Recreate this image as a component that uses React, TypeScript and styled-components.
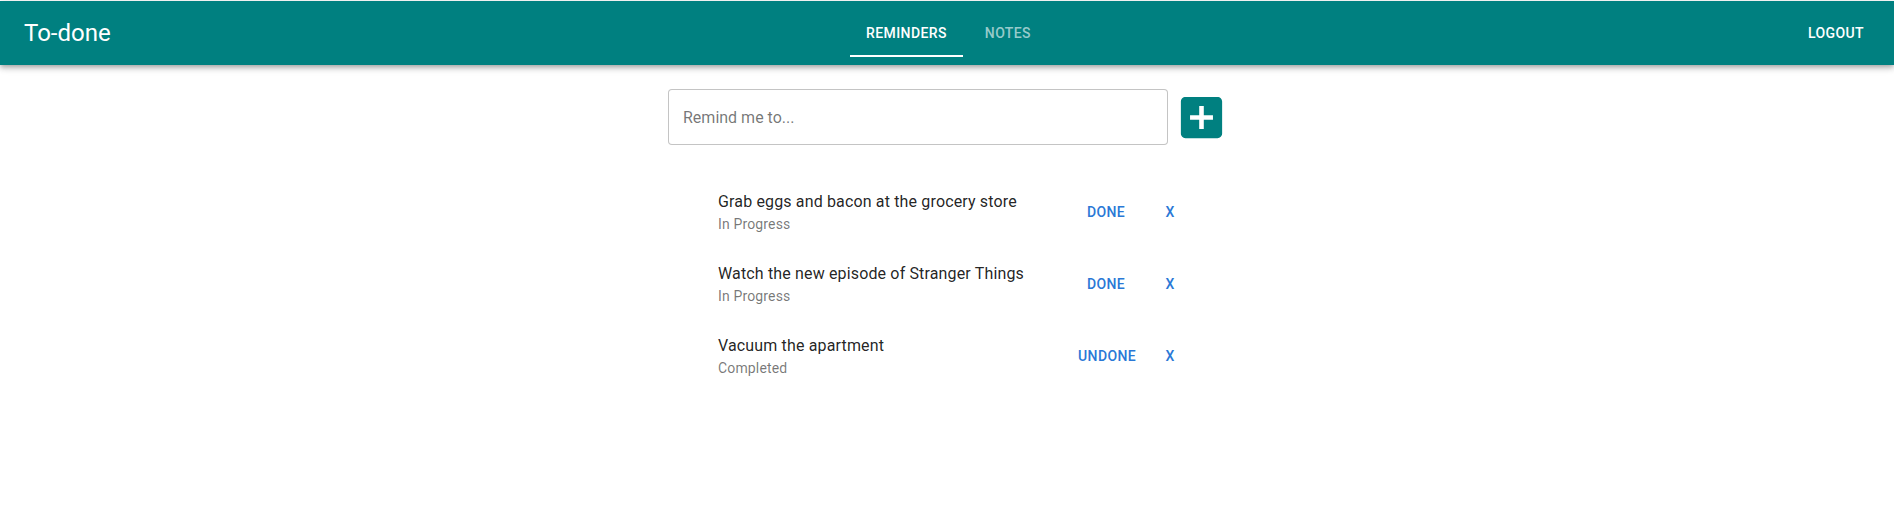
import React from "react";
import styled, { createGlobalStyle } from "styled-components";

const GlobalStyle = createGlobalStyle`
  html, body {
    margin: 0;
    padding: 0;
    background: #ffffff;
    font-family: Roboto, "Liberation Sans", Arial, sans-serif;
  }
  * { box-sizing: border-box; }
`;

const TEAL = "#008080";

const AppBar = styled.header`
  margin-top: 1px;
  background: ${TEAL};
  color: #ffffff;
  box-shadow: 0px 2px 4px -1px rgba(0, 0, 0, 0.2), 0px 4px 5px 0px rgba(0, 0, 0, 0.14),
    0px 1px 10px 0px rgba(0, 0, 0, 0.12);
`;

const Toolbar = styled.div`
  height: 64px;
  padding: 0 22px 0 24px;
  display: grid;
  grid-template-columns: 1fr auto 1fr;
  align-items: center;
`;

const Title = styled.div`
  font-size: 24px;
  font-weight: 400;
  line-height: 32px;
  letter-spacing: 0;
`;

const Tabs = styled.nav`
  display: flex;
  height: 48px;
  padding-left: 7px;
`;

const Tab = styled.button<{ $active?: boolean }>`
  position: relative;
  min-width: 90px;
  height: 48px;
  padding: 12px 16px;
  border: 0;
  background: transparent;
  font-family: Roboto, "Liberation Sans", Arial, sans-serif;
  font-size: 14px;
  font-weight: 500;
  line-height: 24px;
  letter-spacing: 0.02857em;
  text-transform: uppercase;
  color: ${(p) => (p.$active ? "#ffffff" : "rgba(255,255,255,0.6)")};
  cursor: pointer;

  &::after {
    content: "";
    display: ${(p) => (p.$active ? "block" : "none")};
    position: absolute;
    left: 0;
    right: 0;
    bottom: 0;
    height: 2px;
    background: #ffffff;
  }
`;

const RightSlot = styled.div`
  display: flex;
  justify-content: flex-end;
`;

const BarButton = styled.button`
  border: 0;
  background: transparent;
  color: #ffffff;
  font-family: Roboto, "Liberation Sans", Arial, sans-serif;
  font-size: 14px;
  font-weight: 500;
  line-height: 24px;
  letter-spacing: 0.02857em;
  text-transform: uppercase;
  padding: 6px 8px;
  min-width: 64px;
  cursor: pointer;
`;

const Main = styled.main`
  width: 561px;
  margin-left: calc(50% - 279px);
  padding-top: 24px;
`;

const FormRow = styled.form`
  display: flex;
  align-items: center;
  gap: 6px;
`;

const Input = styled.input`
  width: 500px;
  height: 56px;
  padding: 16.5px 14px;
  border: 1px solid rgba(0, 0, 0, 0.23);
  border-radius: 4px;
  font-family: Roboto, "Liberation Sans", Arial, sans-serif;
  font-size: 16px;
  color: rgba(0, 0, 0, 0.87);
  outline: none;

  &::placeholder {
    color: rgba(0, 0, 0, 0.55);
    opacity: 1;
  }
`;

const AddButton = styled.button`
  width: 55px;
  height: 55px;
  padding: 0;
  border: 0;
  background: transparent;
  color: ${TEAL};
  display: flex;
  cursor: pointer;

  svg {
    width: 55px;
    height: 55px;
    fill: currentColor;
  }
`;

const List = styled.ul`
  list-style: none;
  margin: 0;
  padding: 31px 0 8px 34px;
`;

const Row = styled.li`
  width: 496px;
  display: grid;
  grid-template-columns: 1fr 72px 56px;
  align-items: center;
  padding: 8px 0 8px 16px;
`;

const TextBlock = styled.div`
  margin: 6px 0;
`;

const Primary = styled.div`
  font-size: 16px;
  line-height: 24px;
  letter-spacing: 0.00938em;
  color: rgba(0, 0, 0, 0.87);
`;

const Secondary = styled.div`
  font-size: 14px;
  line-height: 20px;
  letter-spacing: 0.01071em;
  color: rgba(0, 0, 0, 0.54);
`;

const ActionCell = styled.div`
  display: flex;
  justify-content: center;
`;

const TextButton = styled.button<{ $compact?: boolean }>`
  border: 0;
  background: transparent;
  color: #2a78d6;
  font-family: Roboto, "Liberation Sans", Arial, sans-serif;
  font-size: 14px;
  font-weight: 500;
  line-height: 24px;
  letter-spacing: 0.02857em;
  text-transform: uppercase;
  padding: 6px 8px;
  min-width: ${(p) => (p.$compact ? "0" : "64px")};
  border-radius: 4px;
  cursor: pointer;
`;

type Reminder = { text: string; done: boolean };

const reminders: Reminder[] = [
  { text: "Grab eggs and bacon at the grocery store", done: false },
  { text: "Watch the new episode of Stranger Things", done: false },
  { text: "Vacuum the apartment", done: true },
];

export default function App() {
  return (
    <>
      <GlobalStyle />
      <AppBar>
        <Toolbar>
          <Title>To-done</Title>
          <Tabs>
            <Tab $active>Reminders</Tab>
            <Tab>Notes</Tab>
          </Tabs>
          <RightSlot>
            <BarButton>Logout</BarButton>
          </RightSlot>
        </Toolbar>
      </AppBar>
      <Main>
        <FormRow onSubmit={(e) => e.preventDefault()}>
          <Input placeholder="Remind me to..." />
          <AddButton type="submit" aria-label="add">
            <svg viewBox="0 0 24 24" aria-hidden="true">
              <path d="M19 3H5c-1.11 0-2 .9-2 2v14c0 1.1.89 2 2 2h14c1.1 0 2-.9 2-2V5c0-1.1-.9-2-2-2zm-2 10h-4v4h-2v-4H7v-2h4V7h2v4h4v2z" />
            </svg>
          </AddButton>
        </FormRow>
        <List>
          {reminders.map((r) => (
            <Row key={r.text}>
              <TextBlock>
                <Primary>{r.text}</Primary>
                <Secondary>{r.done ? "Completed" : "In Progress"}</Secondary>
              </TextBlock>
              <ActionCell>
                <TextButton>{r.done ? "Undone" : "Done"}</TextButton>
              </ActionCell>
              <ActionCell>
                <TextButton $compact>X</TextButton>
              </ActionCell>
            </Row>
          ))}
        </List>
      </Main>
    </>
  );
}
